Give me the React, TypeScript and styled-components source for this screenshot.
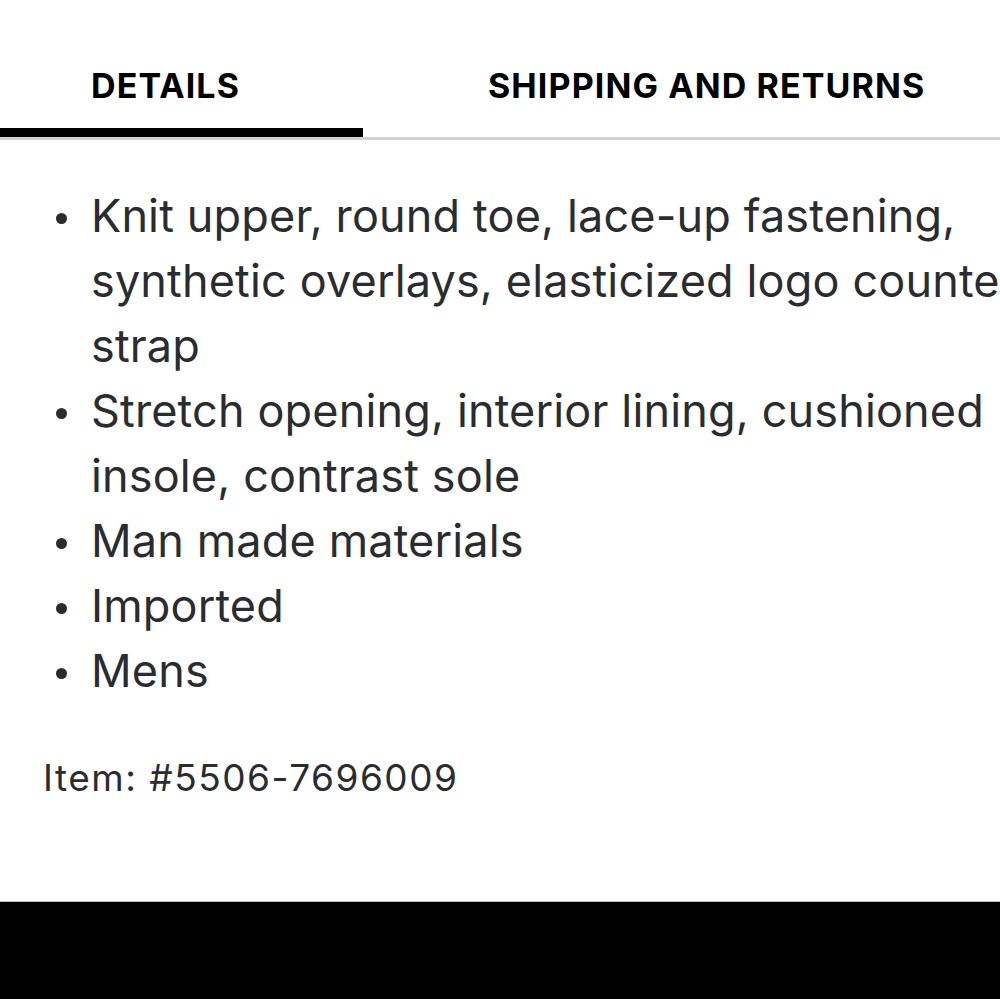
import React from "react";
import styled, { createGlobalStyle } from "styled-components";

const GlobalStyle = createGlobalStyle`
  html, body { margin: 0; padding: 0; background: #ffffff; overflow: hidden; }
  body { font-family: Inter, "Liberation Sans", sans-serif; }
`;

const Page = styled.div`
  width: 1040px;
  display: flex;
  flex-direction: column;
`;

const TabRow = styled.div`
  display: flex;
  width: 1000px;
  border-bottom: 3px solid #d2d2d2;
`;

const Tab = styled.div<{ $active?: boolean; $width?: number; $indent: number }>`
  box-sizing: border-box;
  width: ${(p) => (p.$width ? `${p.$width}px` : "auto")};
  padding: 65px 0 22px ${(p) => p.$indent}px;
  font-size: 34px;
  line-height: 41px;
  font-weight: 700;
  letter-spacing: 1.1px;
  color: #000;
  white-space: nowrap;
  border-bottom: 9px solid ${(p) => (p.$active ? "#000" : "transparent")};
`;

const Content = styled.div`
  padding: 43px 0 0 43px;
  color: #2a2c30;
`;

const List = styled.ul`
  list-style: none;
  margin: 0;
  padding: 0;
`;

const Item = styled.li`
  display: grid;
  grid-template-columns: 48px 1fr;
  font-size: 45px;
  line-height: 65px;
  letter-spacing: 0.15px;
`;

const Bullet = styled.span`
  width: 11px;
  height: 11px;
  border-radius: 50%;
  background: #2a2c30;
  margin: 30px 0 0 13px;
`;

const ItemNumber = styled.p`
  margin: 49px 0 0;
  font-size: 37px;
  line-height: 52px;
  letter-spacing: 1.5px;
`;

const Footer = styled.div`
  margin-top: 97px;
  height: 120px;
  width: 1000px;
  background: #000;
  border-top: 1px solid #bdbdbd;
`;

const bullets = [
  "Knit upper, round toe, lace-up fastening, synthetic overlays, elasticized logo counter strap",
  "Stretch opening, interior lining, cushioned insole, contrast sole",
  "Man made materials",
  "Imported",
  "Mens",
];

export default function App() {
  return (
    <>
      <GlobalStyle />
      <Page>
        <TabRow>
          <Tab $active $width={363} $indent={91}>DETAILS</Tab>
          <Tab $indent={125}>SHIPPING AND RETURNS</Tab>
        </TabRow>
        <Content>
          <List>
            {bullets.map((b) => (
              <Item key={b}>
                <Bullet />
                <span>{b}</span>
              </Item>
            ))}
          </List>
          <ItemNumber>Item: #5506-7696009</ItemNumber>
        </Content>
        <Footer />
      </Page>
    </>
  );
}
